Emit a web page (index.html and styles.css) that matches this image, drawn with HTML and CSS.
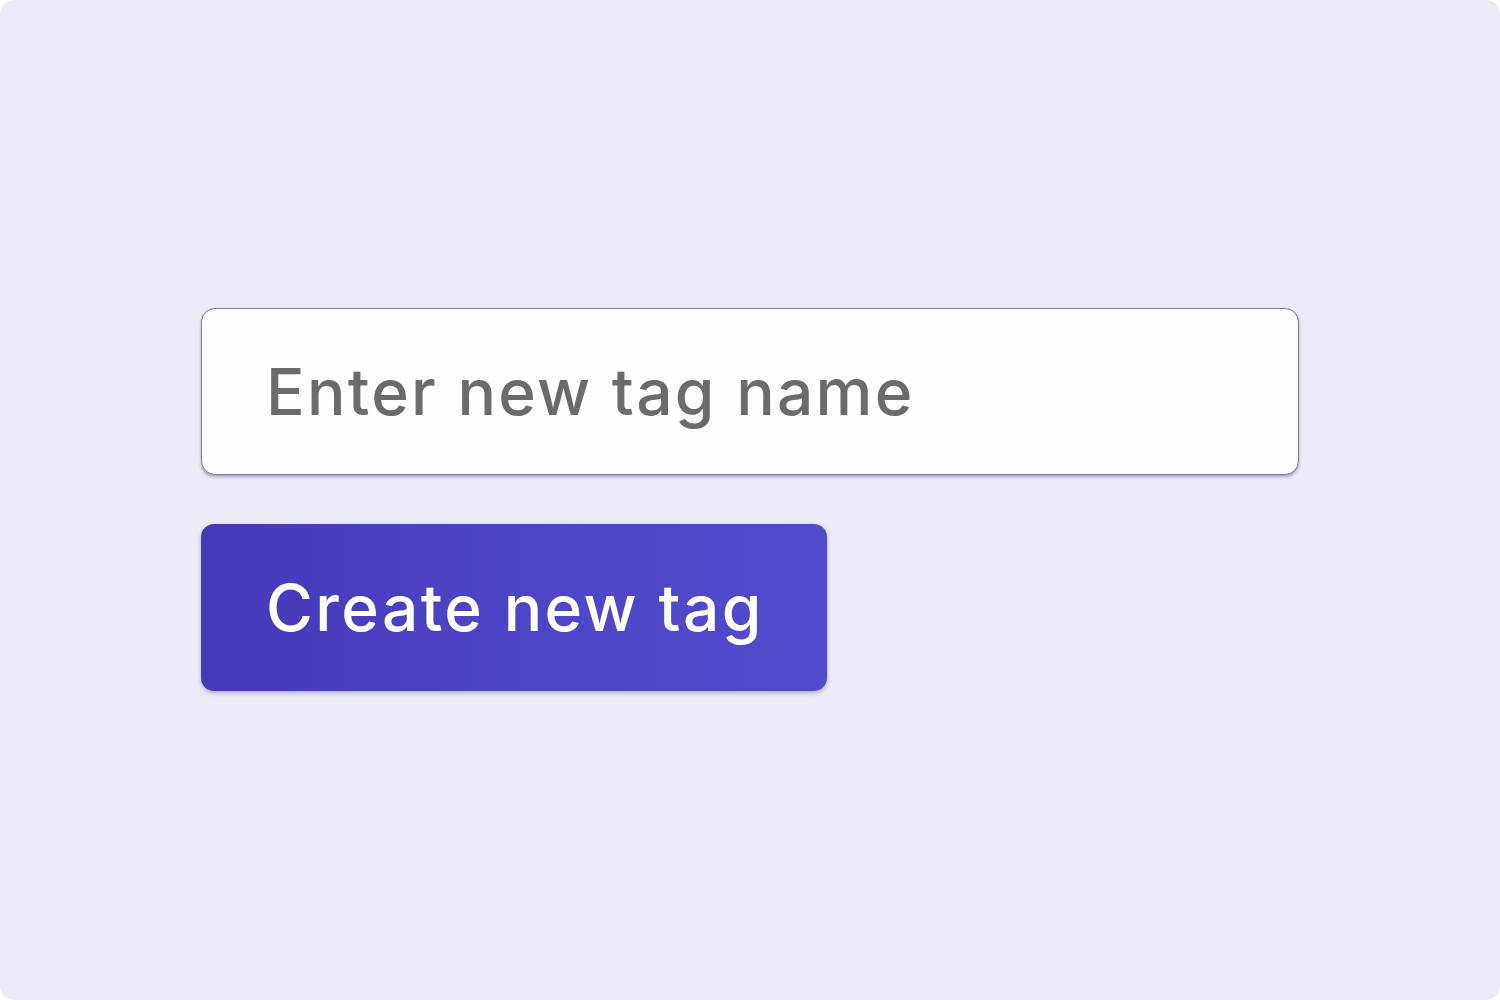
FILE: index.html
```html
<!DOCTYPE html>
<html>
<head>
<meta charset="utf-8">
<link rel="stylesheet" href="styles.css">
</head>
<body>
<div class="frame">
  <div class="form">
    <div class="input"><span class="placeholder">Enter new tag name</span></div>
    <div class="button">Create new tag</div>
  </div>
</div>
</body>
</html>
```
FILE: styles.css
```css
html, body {
  margin: 0;
  padding: 0;
  background: #ffffff;
}
.frame {
  width: 1500px;
  height: 1000px;
  box-sizing: border-box;
  background: #ebebf7;
  border-radius: 14px;
  padding: 308px 0 0 201px;
  font-family: Inter, "Noto Sans", sans-serif;
}
.form {
  display: flex;
  flex-direction: column;
  align-items: flex-start;
  gap: 49px;
}
.input {
  width: 1098px;
  height: 167px;
  box-sizing: border-box;
  background: #fefefe;
  border: 1px solid #7b7ba6;
  border-radius: 14px;
  box-shadow: 0 2px 3px rgba(60, 60, 90, 0.4);
  display: flex;
  align-items: center;
  padding-left: 64px;
}
.placeholder {
  color: #6b6b6b;
  font-size: 64px;
  font-weight: 500;
  letter-spacing: 2.3px;
}
.button {
  width: 626px;
  height: 167px;
  box-sizing: border-box;
  border-radius: 13px;
  background: linear-gradient(90deg, #4538b8 0%, #4e45c6 50%, #5349cc 100%);
  box-shadow: 0 2px 4px rgba(40, 30, 110, 0.3);
  color: #ffffff;
  display: flex;
  align-items: center;
  padding-left: 65px;
  font-size: 64px;
  font-weight: 500;
  letter-spacing: 2.4px;
}
```
